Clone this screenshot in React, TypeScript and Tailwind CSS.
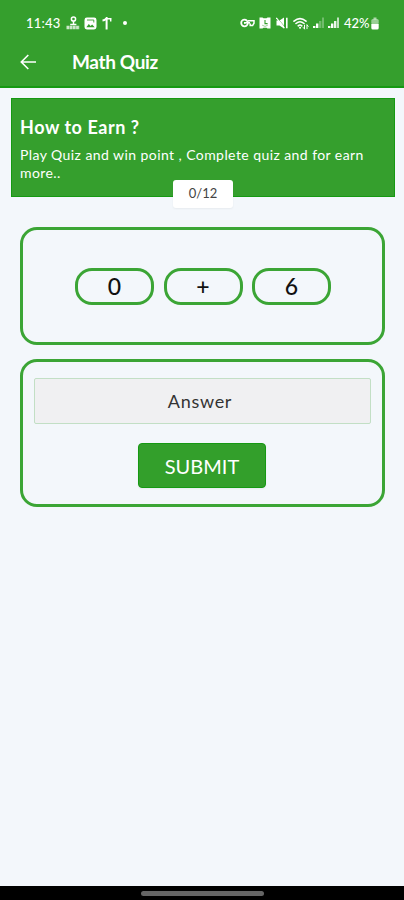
import type { ReactNode } from 'react';

const StatusLeft = () => (
  <div className="flex items-center">
    <span className="w-[35px] text-[13px] leading-none font-medium tracking-[0.2px] whitespace-nowrap">11:43</span>
    <svg className="ml-[5px] w-[14px] h-[14px]" viewBox="0 0 14 14" fill="none" stroke="currentColor">
      <circle cx="7.5" cy="3" r="2.1" strokeWidth="1.5" />
      <path d="M7.5 5V9M4.2 8.4h6.2" strokeWidth="1.5" />
      <path d="M0.5 11.5h13" strokeWidth="3.4" strokeDasharray="2.8 0.4" opacity="0.75" />
    </svg>
    <svg className="ml-[4px] w-[13px] h-[13px]" viewBox="0 0 13 13">
      <rect x="0.5" y="0.5" width="12" height="12" rx="2.4" fill="currentColor" />
      <path d="M2.3 10.2l2.5-3.2 1.8 2 1.5-1.6 2.6 2.8z" fill="#359f2d" />
      <path d="M3 3h6.8v2.5" fill="none" stroke="#359f2d" strokeWidth="0.9" />
    </svg>
    <svg className="ml-[5px] w-[10px] h-[13px]" viewBox="0 0 10 13" fill="none" stroke="currentColor">
      <path d="M0.5 3.5Q3 3.3 4.6 1v11.5" strokeWidth="2" />
      <path d="M5 1.8h4.5M8.7 1.5v3" strokeWidth="1.5" />
    </svg>
    <span className="ml-[11px] w-[4px] h-[4px] rounded-full bg-white" />
  </div>
);

const Signal = ({ dim = false }: { dim?: boolean }) => (
  <svg className="ml-[4px] w-[11px] h-[12px]" viewBox="0 0 11 12" fill="currentColor">
    <rect x="0" y="9" width="2.4" height="2" />
    <rect x="3" y="6.5" width="2.4" height="4.5" />
    <rect x="6" y="4" width="2.4" height="7" opacity={dim ? 0.3 : 0.9} />
    <rect x="9" y="0.5" width="2" height="10.5" opacity={dim ? 0.3 : 0.7} />
  </svg>
);

const StatusRight = () => (
  <div className="flex items-center">
    <svg className="w-[15px] h-[10px]" viewBox="0 0 15 10" fill="none" stroke="currentColor">
      <circle cx="4.5" cy="5" r="3.3" strokeWidth="1.8" />
      <path d="M4 4.8h6M8 2.8h6v2.4l-1.4 2.4h-2.4V5.4" strokeWidth="1.5" />
      <path d="M4 5h1.6" strokeWidth="1.6" />
    </svg>
    <svg className="ml-[4px] w-[12px] h-[12px]" viewBox="0 0 12 12">
      <path d="M0.5 0.5h3l1 .7h3l1-.7h3v11h-3l-1-.7h-3l-1 .7h-3z" fill="currentColor" />
      <path d="M6 3v3.6h2.6" fill="none" stroke="#359f2d" strokeWidth="1.1" />
      <path d="M3.2 8.2Q6 10.600 8.800 8.200" fill="none" stroke="#359f2d" strokeWidth="0.5" />
    </svg>
    <svg className="ml-[5px] w-[12px] h-[12px]" viewBox="0 0 12 12">
      <path d="M0.5 3.5h3L8 0.5v11L3.5 8.5h-3z" fill="currentColor" />
      <path d="M10.8 0.8v10.4" stroke="currentColor" strokeWidth="1.6" />
      <path d="M1.2 0.8l7.5 9" stroke="#359f2d" strokeWidth="0.6" />
      <path d="M0.4 0.8l8 10.4" stroke="currentColor" strokeWidth="1.1" />
    </svg>
    <svg className="ml-[5px] w-[16px] h-[13px]" viewBox="0 0 16 13" fill="none" stroke="currentColor" strokeLinecap="round">
      <path d="M1 4.2Q7 -1 13 4.2M3 6.5Q7 3 11 6.5M5.2 8.8Q7 7.2 8.8 8.8" strokeWidth="1.6" />
      <path d="M7 10.8h.1" strokeWidth="2" />
      <path d="M11.5 11.8V8.2M10.3 10.6l1.2 1.3M14 8v3.7M14 8l1.2 1.3" strokeWidth="1" />
    </svg>
    <Signal dim />
    <Signal />
    <span className="ml-[5px] w-[26px] text-[13px] leading-none font-medium tracking-[-0.1px] whitespace-nowrap">42%</span>
    <svg className="ml-px w-[8px] h-[13px]" viewBox="0 0 8 13" fill="currentColor">
      <rect x="2.5" y="0.5" width="3" height="2" opacity="0.6" />
      <rect x="0.3" y="2" width="7.4" height="5.5" rx="1.5" opacity="0.5" />
      <path d="M0.3 7h7.4v4q0 1.5-1.5 1.5h-4.4Q0.3 12.5 0.3 11z" />
    </svg>
  </div>
);

const Pill = ({ children }: { children: ReactNode }) => (
  <div className="w-[79px] h-[37px] rounded-[17px] border-3 border-[#3ba535] flex items-center justify-center text-[23px] leading-none font-medium text-[#111]">
    {children}
  </div>
);

export default function App() {
  return (
    <div className="w-full h-[900px] flex flex-col bg-[#f3f7fb] font-['Lato','Noto_Sans',sans-serif] overflow-hidden">
      {/* Header */}
      <header className="h-[88px] shrink-0 bg-[#359f2d] border-b-2 border-[#159912] text-white">
        <div className="h-[46px] pl-[26px] pr-[25px] flex items-center justify-between">
          <StatusLeft />
          <StatusRight />
        </div>
        <div className="h-[31px] pl-[20px] flex items-center">
          <svg className="w-[17px] h-[16px]" viewBox="0 0 17 16" fill="none" stroke="currentColor" strokeWidth="1.6">
            <path d="M16 8H1.5M8.3 1L1.3 8l7 7" />
          </svg>
          <h1 className="ml-[35px] text-[19px] leading-none font-bold tracking-[-0.35px] whitespace-nowrap">Math Quiz</h1>
        </div>
      </header>

      {/* Instructions */}
      <section className="relative mt-[10px] ml-[11px] mr-[9px] h-[99px] shrink-0 bg-[#359f2d] border border-[#159912] px-[8px] pt-[17px] text-white">
        <h2 className="text-[18px] leading-[22px] font-bold tracking-[0.55px] whitespace-nowrap">How to Earn ?</h2>
        <p className="mt-[8px] text-[14px] leading-[18px] tracking-[0.43px] whitespace-nowrap">
          Play Quiz and win point , Complete quiz and for earn
          <br />
          more..
        </p>
        <div className="absolute left-[161px] top-[81px] w-[60px] h-[28px] rounded-[3px] bg-white shadow-xs flex items-center justify-center text-[13px] text-[#444]">
          0/12
        </div>
      </section>

      {/* Question */}
      <section className="mt-[30px] ml-[20px] mr-[19px] h-[118px] shrink-0 rounded-[17px] border-3 border-[#3ba535] pl-[52px] flex items-center gap-[9.5px]">
        <Pill>0</Pill>
        <Pill>+</Pill>
        <Pill>6</Pill>
      </section>

      {/* Answer */}
      <section className="mt-[14px] ml-[20px] mr-[19px] h-[148px] shrink-0 rounded-[17px] border-3 border-[#3ba535] px-[11px] pt-[16px] flex flex-col items-center">
        <div className="w-full h-[46px] rounded-[2px] border border-[#c2dfc5] bg-[#f0f0f2] pr-[5px] flex items-center justify-center text-[18px] tracking-[0.7px] text-[#333]">
          Answer
        </div>
        <button className="mt-[19px] mr-px w-[128px] h-[45px] rounded-[4px] bg-[#339f2b] border border-[#159912] shadow-xs text-[20px] text-white">
          SUBMIT
        </button>
      </section>

      {/* Navigation bar */}
      <footer className="mt-auto h-[14px] shrink-0 bg-black flex items-center justify-center">
        <div className="w-[123px] h-[5px] rounded-full bg-[#656565]" />
      </footer>
    </div>
  );
}
